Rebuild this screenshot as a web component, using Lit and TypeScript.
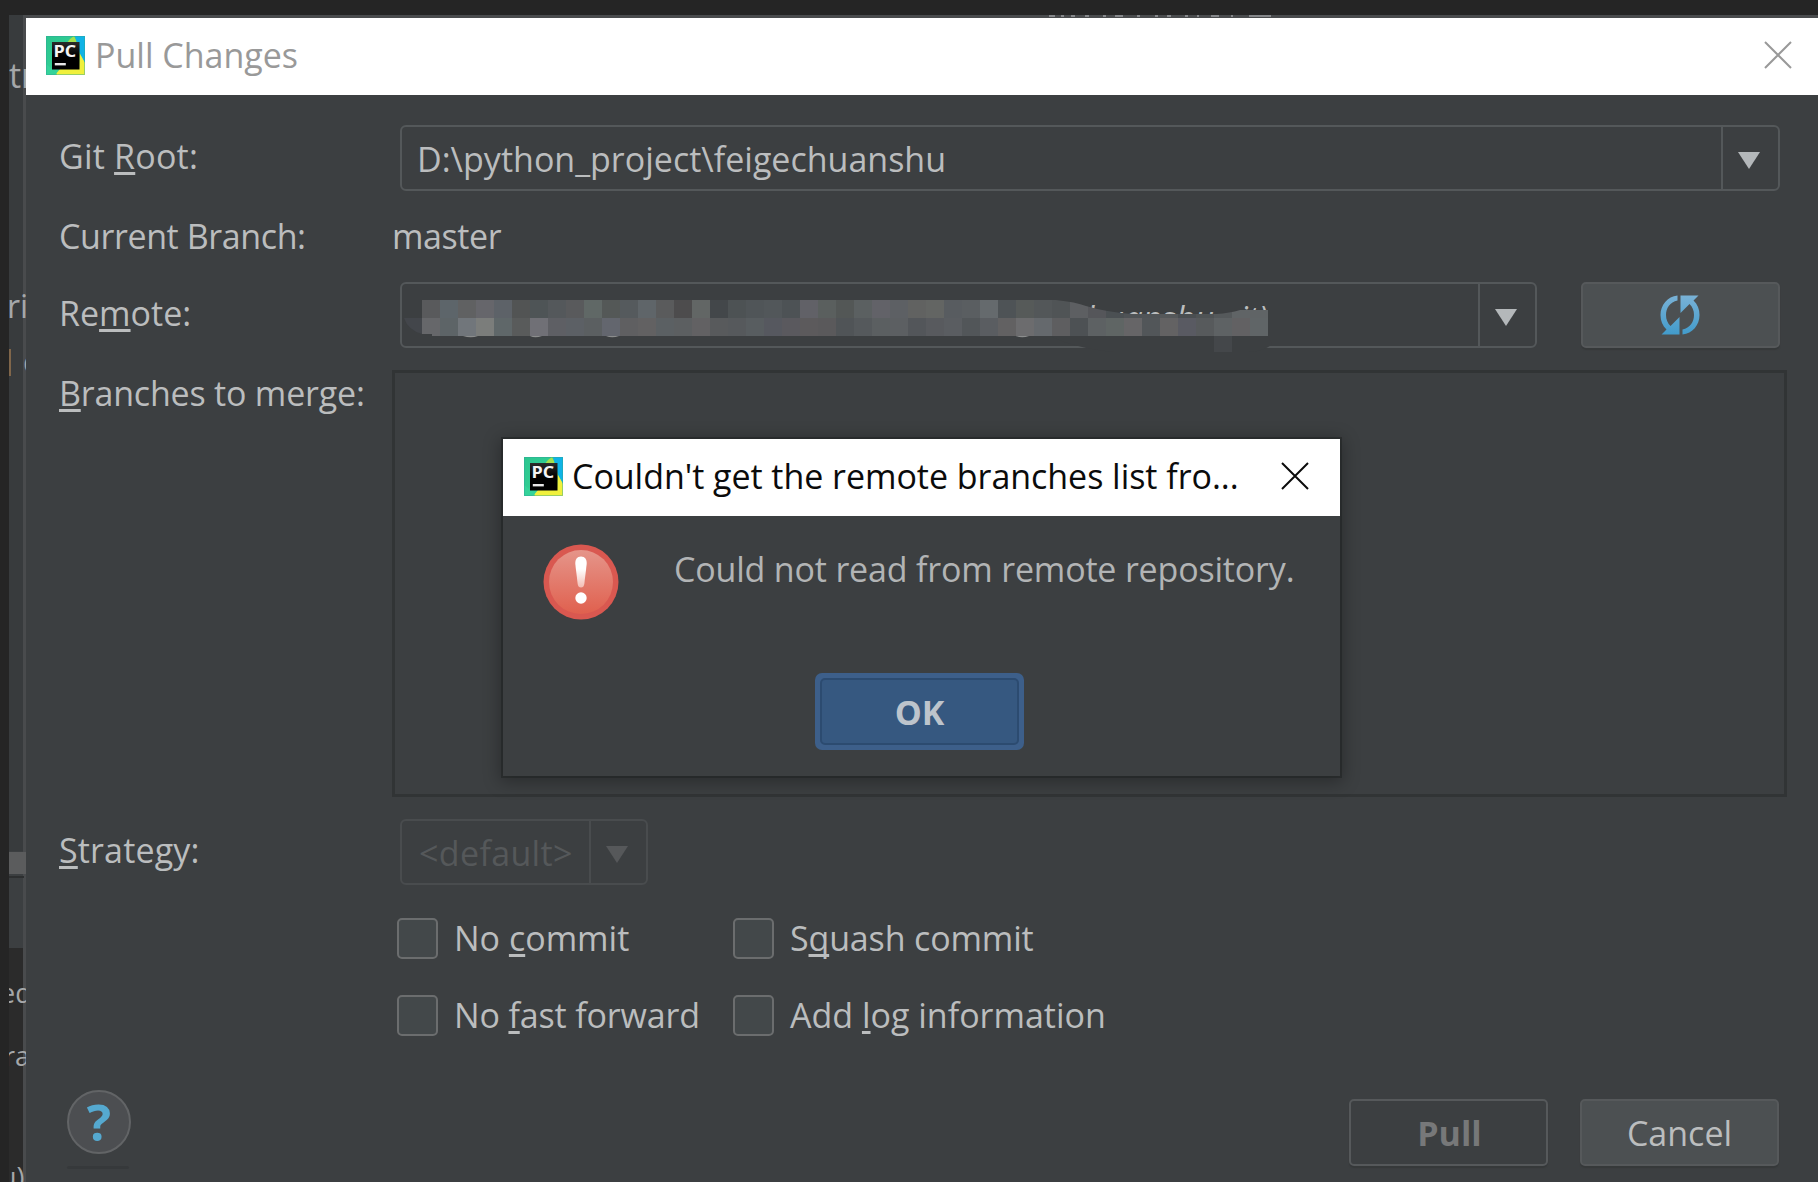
import { LitElement, html, svg, css } from "lit";
import { customElement, property } from "lit/decorators.js";

/** Renders a label whose mnemonic letter is marked with "&", e.g. "Git &Root:". */
function mnemonic(label: string) {
  const at = label.indexOf("&");
  if (at < 0) return html`${label}`;
  return html`${label.slice(0, at)}<span class="key">${label[at + 1]}</span>${label.slice(at + 2)}`;
}

const keyStyle = css`
  .key {
    text-decoration: underline;
    text-decoration-thickness: 3px;
    text-underline-offset: 3px;
    text-decoration-skip-ink: none;
  }
`;

@customElement("pc-logo")
class PcLogo extends LitElement {
  static styles = css`
    :host { display: block; flex: none; width: 39px; height: 39px; margin-top: -2px; }
    svg { display: block; }
  `;
  render() {
    return html`<svg width="39" height="39" viewBox="0 0 39 39">
      <defs>
        <linearGradient id="g" x1="0" y1="0" x2="1" y2="1">
          <stop offset="0" stop-color="#2bc58f" />
          <stop offset="0.45" stop-color="#31cd93" />
          <stop offset="0.8" stop-color="#9fe25c" />
        </linearGradient>
        <linearGradient id="k" x1="0" y1="0" x2="0" y2="1">
          <stop offset="0" stop-color="#2b2b2b" />
          <stop offset="0.5" stop-color="#000" />
        </linearGradient>
      </defs>
      <rect width="39" height="39" fill="url(#g)" />
      <path d="M20 8 24 3 28 0 31 6 34 20 26 30Z" fill="#a4e04e" />
      <path d="M29 0H39V27L34 18Z" fill="#10b3e6" />
      <path d="M34 18 39 27V39H11L9 32 33 33Z" fill="#f0f03c" />
      <path d="M6 33H14L9 39H0V28Z" fill="#35d39a" />
      <path d="M0.5 0.5H38.5V38.5H0.5Z" fill="none" stroke="#2fa596" stroke-opacity="0.45" />
      <rect x="6" y="6" width="27.5" height="27.5" fill="url(#k)" />
      <text x="7.6" y="20.6" textLength="22.6" lengthAdjust="spacingAndGlyphs" font-family="Open Sans, sans-serif"
        font-weight="700" font-size="16.5" fill="#f4f4f4">PC</text>
      <rect x="8.8" y="27" width="11" height="2.4" fill="#e8e8e8" />
    </svg>`;
  }
}

@customElement("close-icon")
class CloseIcon extends LitElement {
  static styles = css`
    :host { display: block; flex: none; width: 28px; height: 28px; margin-top: -3px; }
    svg { display: block; }
  `;
  render() {
    return html`<svg width="28" height="28" viewBox="0 0 28 28">
      <path d="M1 1 27 27M27 1 1 27" fill="none" stroke="currentColor" stroke-width="2" />
    </svg>`;
  }
}

@customElement("combo-box")
class ComboBox extends LitElement {
  @property({ type: Boolean, reflect: true }) disabled = false;

  static styles = css`
    :host {
      display: flex;
      box-sizing: border-box;
      height: 66px;
      border: 2px solid #54585a;
      border-radius: 6px;
      color: #bbbdbe;
      position: relative;
    }
    :host([disabled]) { border-color: #494c4e; color: #55585a; }
    .value { flex: 1; min-width: 0; padding-left: 15px; line-height: 65px; white-space: pre; }
    .arrow {
      width: 57px;
      border-left: 2px solid #54585a;
      display: flex;
      align-items: center;
      box-sizing: border-box;
      padding-left: 15px;
    }
    :host([disabled]) .arrow { border-color: #494c4e; }
    .arrow svg { display: block; margin-top: 4px; }
  `;
  render() {
    return html`<div class="value"><slot></slot></div>
      <div class="arrow">
        <svg width="22" height="17" viewBox="0 0 22 17"><path d="M0 0H22L11 17Z" fill=${this.disabled ? "#56585a" : "#b4b8ba"} /></svg>
      </div>`;
  }
}

@customElement("check-box")
class CheckBox extends LitElement {
  @property() label = "";

  static styles = [
    keyStyle,
    css`
      :host { display: flex; align-items: center; height: 41px; line-height: 41px; white-space: pre; }
      .box {
        box-sizing: border-box;
        width: 41px;
        height: 41px;
        margin-right: 16px;
        border: 2.4px solid #6b6d6e;
        border-radius: 5px;
        background: #43484a;
      }
      .text { padding-bottom: 1px; }
    `,
  ];
  render() {
    return html`<span class="box"></span><span class="text">${mnemonic(this.label)}</span>`;
  }
}

const CELL = 18;
const UPPER =
  "595a5c 5d656a 606162 66666b 5d6268 525454 4e5456 54585b 595a5c 606866 545857 555a5d 5f6569 5a5b5c 4d4c4d 626665 43474a 4d5254 505558 52575a 4d5255 616167 5a5f5e 535756 5b6061 626268 5d6064 616261 636563 585c60 5a5e61 656a6d 4e5356 565a59 535759 505456 5d5f62 55565a 4b5053 4f5356 505457 55585a 4a4e51 4f5355 55595b 606466 606466".split(" ");
const LOWER =
  "66676a 5d6467 71767b 7b7d7b 5f6769 595b5b 707076 5e5f64 5c6065 5b5f61 63666e 5f5f61 626162 5b6063 5c5f61 626163 585a5c 56595c 585d60 56585f 5a595e 5c5a5c 5a595b 505457 55595c 5b5f61 5c5f62 53565a 585a5e 5a5d61 525659 5a5d61 626162 6c6c6e 65696d 5e5e60 4d5154 5d6163 5f6564 666567 525659 636263 595a62 575a5c 5e6264 626163 606567".split(" ");

/** Pixelated strip that conceals the remote address. */
@customElement("pixel-mask")
class PixelMask extends LitElement {
  static styles = css`
    :host { display: block; position: absolute; left: 2px; top: 10px; }
    svg { display: block; }
  `;
  render() {
    return html`<svg width="880" height="60" viewBox="0 0 880 60">
      <defs>
        <clipPath id="c"><path d="M0 6H652Q672 8 682 12Q702 18 728 20H812Q826 19 836 16H864V24H0Z" /></clipPath>
      </defs>
      <path d="M652 24V6Q680 13 698 16Q714 19 728 20H812L836 16H864V24Z" fill="#3c3f41" />
      <path d="M0 24H18V40Q4 36 0 24Z" fill="#43464b" />
      <path d="M646 42H864L868 50Q860 58 840 58H710Q670 54 646 42Z" fill="#3c3f41" />
      <g clip-path="url(#c)" shape-rendering="crispEdges">
        ${UPPER.map((c, i) => svg`<rect x=${18 + i * CELL} y="6" width=${CELL} height=${CELL} fill=${"#" + c} />`)}
      </g>
      <g shape-rendering="crispEdges">
        ${LOWER.map((c, i) => svg`<rect x=${18 + i * CELL} y="24" width=${CELL} height=${CELL} fill=${"#" + c} />`)}
        <rect x="810" y="42" width="18" height="16" fill="#44474a" />
      </g>
      <path d="M18 40H28V42H18Z" fill="#3c3f41" />
      <path d="M59 42H74Q67 44.500 59 42ZM126 42H138Q131 44.500 126 42ZM202 42H215Q208 44.500 202 42ZM612 42H625Q618 44.500 612 42Z" fill="#8b8d8d" />
    </svg>`;
  }
}

@customElement("error-dialog")
class ErrorDialog extends LitElement {
  static styles = css`
    :host {
      display: flex;
      flex-direction: column;
      width: 837px;
      height: 337px;
      background: #3c3f41;
      box-shadow: 0 0 0 2px rgba(34, 36, 37, 0.6), 0 3px 16px 3px rgba(0, 0, 0, 0.3);
      color: #b2b4b5;
    }
    .title {
      display: flex;
      align-items: center;
      box-sizing: border-box;
      height: 77px;
      padding: 0 31px 0 21px;
      background: #fff;
      color: #0b0b0b;
      white-space: pre;
    }
    .title span { flex: 1; margin-left: 9px; line-height: 75px; height: 77px; letter-spacing: -0.04px; }
    .message { display: flex; margin: 28px 0 0 40px; }
    .message svg { display: block; flex: none; }
    .message p { margin: 0 0 0 55px; line-height: 50px; white-space: pre; letter-spacing: -0.18px; }
    .ok {
      box-sizing: border-box;
      width: 209px;
      height: 77px;
      margin: 53px 0 0 312px;
      padding: 5px;
      border-radius: 7px;
      background: #3d5f8a;
    }
    .face {
      box-sizing: border-box;
      height: 67px;
      border: 2px solid #2c4b70;
      border-radius: 5px;
      background: #365880;
      color: #bdc4cc;
      font-weight: 700;
      text-align: center;
      line-height: 64px;
    }
  `;
  render() {
    return html`
      <div class="title">
        <pc-logo></pc-logo>
        <span>Couldn't get the remote branches list fro...</span>
        <close-icon></close-icon>
      </div>
      <div class="message">
        <svg width="76" height="76" viewBox="0 0 76 76">
          <defs>
            <linearGradient id="r" x1="0" y1="0" x2="0" y2="1">
              <stop offset="0" stop-color="#e5958a" /><stop offset="1" stop-color="#e0604e" />
            </linearGradient>
            <linearGradient id="w" x1="0" y1="0" x2="0" y2="1">
              <stop offset="0.4" stop-color="#fff" /><stop offset="1" stop-color="#f3bdb4" />
            </linearGradient>
          </defs>
          <circle cx="38" cy="38" r="37.500" fill="#d95850" />
          <circle cx="38" cy="38" r="32" fill="url(#r)" />
          <path d="M38 12.500C42 12.500 44 15.500 43.700 20L41.300 40Q40.800 43.500 38 43.500T34.700 40L32.300 20C32 15.500 34 12.500 38 12.500Z" fill="url(#w)" />
          <circle cx="38" cy="54" r="5.700" fill="#fff" />
        </svg>
        <p>Could not read from remote repository.</p>
      </div>
      <div class="ok"><div class="face">OK</div></div>
    `;
  }
}

@customElement("app-root")
class AppRoot extends LitElement {
  static styles = [
    keyStyle,
    css`
      :host {
        display: block;
        position: relative;
        box-sizing: border-box;
        width: 1818px;
        height: 1182px;
        padding: 15px 0 0 9px;
        overflow: hidden;
        background: #252525;
        font-family: "Open Sans", "Noto Sans", sans-serif;
        font-size: 34px;
        color: #bbbdbe;
      }
      .ide { display: flex; height: 1167px; }
      .strip { flex: none; width: 14px; background: #2b2b2b; position: relative; }
      .pane { height: 836px; background: #383b3d; }
      .pane2 { height: 97px; background: #3c3f41; }
      .frag {
        position: absolute;
        width: 17px;
        height: 40px;
        line-height: 40px;
        overflow: hidden;
        white-space: pre;
        font-size: 27px;
        z-index: 1;
        color: #a5a7a9;
      }
      .frag i { font-style: normal; position: relative; }
      .thumb { position: absolute; left: 0; top: 837px; width: 17px; height: 22px; background: #5b5c5d; z-index: 1; }
      .rule { position: absolute; left: 0; top: 861px; width: 15px; height: 2px; background: #2d2f30; }
      .bar { position: absolute; left: 0; top: 334px; width: 2px; height: 27px; background: #80664a; z-index: 1; }
      .dialog {
        flex: 1;
        box-sizing: border-box;
        border: 3px solid #494b4d;
        border-width: 3px 0 0 3px;
        background: #3c3f41;
        display: flex;
        flex-direction: column;
      }
      .title {
        display: flex;
        align-items: center;
        box-sizing: border-box;
        height: 77px;
        flex: none;
        padding: 0 26px 0 20px;
        background: #fff;
        color: #999;
      }
      .title span { flex: 1; margin-left: 10px; height: 77px; line-height: 74px; }
      .row { display: flex; flex: none; margin-left: 33px; width: 1721px; }
      .label { width: 341px; flex: none; white-space: pre; line-height: 63px; }
      .fill { flex: 1; }
      .r1 { margin-top: 30px; }
      .r1 .label { letter-spacing: 0.2px; }
      .r2 { margin-top: 22px; height: 44px; }
      .r2 .label, .branch { line-height: 46px; letter-spacing: -0.4px; }
      .branch { margin-left: -8px; }
      .r3 { margin-top: 25px; }
      .remote { width: 1137px; flex: none; margin-right: 44px; }
      .tail {
        position: absolute;
        right: 267px;
        top: 0;
        line-height: 68px;
        font-style: italic;
        font-size: 33px;
      }
      .button {
        box-sizing: border-box;
        width: 199px;
        height: 67px;
        border: 2px solid #56595b;
        border-radius: 5px;
        background: #4c5052;
        line-height: 64px;
        text-align: center;
        box-shadow: 0 2px 1px #36393a;
      }
      .refresh { height: 66px; display: flex; align-items: center; justify-content: center; padding-right: 2px; }
      .refresh svg { display: block; }
      .off { background: none; color: #777879; font-weight: 700; padding-left: 2px; }
      .r4 { margin-top: 22px; height: 427px; width: 1728px; }
      .r4 .label { width: 333px; line-height: 46px; letter-spacing: -0.2px; }
      .list { flex: 1; border: 3px solid #313435; }
      .r5 { margin-top: 22px; }
      .r5 .label { letter-spacing: 0.15px; }
      .strategy { width: 248px; }
      .strategy span { margin-left: 2px; letter-spacing: 0.35px; }
      .checks {
        display: grid;
        flex: none;
        grid-template-columns: 336px 1fr;
        row-gap: 36px;
        margin: 33px 0 0 371px;
      }
      .tight { letter-spacing: -0.15px; }
      .foot { margin-top: 63px; width: 1720px; align-items: flex-start; }
      .help {
        box-sizing: border-box;
        width: 64px;
        height: 64px;
        margin: -9px 0 0 8px;
        border: 2px solid #626466;
        border-radius: 50%;
        background: #4c4e51;
        color: #55a9d0;
        font-weight: 700;
        font-size: 51px;
        line-height: 59px;
        text-align: center;
      }
      .shade { width: 62px; height: 3px; margin: 12px 0 0 8px; background: #36393b; border-radius: 2px; }
      .cancel { margin-left: 32px; }
      .peek { position: absolute; left: 1045px; top: 15px; }
      .modal { position: absolute; left: 503px; top: 439px; }
    `,
  ];

  render() {
    return html`
      <div class="ide">
        <div class="strip">
          <div class="pane"></div>
          <div class="pane2"></div>
          <div class="frag" style="top:40px;font-size:34px">tr</div>
          <div class="frag" style="top:271px;font-size:32px"><i style="left:-2px">ri</i></div>
          <div class="bar"></div>
          <div class="frag" style="top:326px;font-size:31px"><i style="left:14px">d</i></div>
          <div class="thumb"></div>
          <div class="rule"></div>
          <div class="frag" style="top:958px"><i style="left:-9px">ed</i></div>
          <div class="frag" style="top:1021px"><i style="left:-5px">ra</i></div>
          <div class="frag" style="top:1142px;height:25px"><i style="left:-9px">u)</i></div>
        </div>
        <div class="dialog">
          <div class="title">
            <pc-logo></pc-logo>
            <span>Pull Changes</span>
            <close-icon></close-icon>
          </div>
          <div class="row r1">
            <div class="label">${mnemonic("Git &Root:")}</div>
            <combo-box class="fill">D:\\python_project\\feigechuanshu</combo-box>
          </div>
          <div class="row r2">
            <div class="label">Current Branch:</div>
            <div class="branch">master</div>
          </div>
          <div class="row r3">
            <div class="label">${mnemonic("Re&mote:")}</div>
            <combo-box class="remote"><span class="tail">huanshu.git)</span><pixel-mask></pixel-mask></combo-box>
            <div class="button refresh">
              <svg width="40" height="40" viewBox="0 0 40 40">
                <defs>
                  <linearGradient id="b" gradientUnits="userSpaceOnUse" x1="0" y1="0" x2="0" y2="40">
                    <stop offset="0" stop-color="#7ab2d6" /><stop offset="1" stop-color="#419bcb" />
                  </linearGradient>
                </defs>
                <g fill="url(#b)">
                  <path d="M17.500 0.500V5.500C10 7 6 13 6 20C6 24.500 7.500 28 10.500 31L19.500 22V39.500H1.500L6.500 34.500C2.500 30.500 0.500 26 0.500 20C0.500 10 7.500 1.500 17.500 0.500Z" />
                  <path d="M22.500 39.500V34.500C30 33 34 27 34 20C34 15.500 32.500 12 29.500 9L20.500 18V0.500H38.500L33.500 5.500C37.500 9.500 39.500 14 39.500 20C39.500 30 32.500 38.500 22.500 39.500Z" />
                </g>
              </svg>
            </div>
          </div>
          <div class="row r4">
            <div class="label">${mnemonic("&Branches to merge:")}</div>
            <div class="list"></div>
          </div>
          <div class="row r5">
            <div class="label">${mnemonic("&Strategy:")}</div>
            <combo-box class="strategy" disabled><span>&lt;default&gt;</span></combo-box>
          </div>
          <div class="checks">
            <check-box label="No &commit"></check-box>
            <check-box class="tight" label="S&quash commit"></check-box>
            <check-box class="tight" label="No &fast forward"></check-box>
            <check-box label="Add &log information"></check-box>
          </div>
          <div class="row foot">
            <div>
              <div class="help">?</div>
              <div class="shade"></div>
            </div>
            <div class="fill"></div>
            <div class="button off">Pull</div>
            <div class="button cancel">Cancel</div>
          </div>
        </div>
      </div>
      <svg class="peek" width="230" height="3" viewBox="0 0 230 3">
        <path d="M4 1H10M16 1H19M26 1H30M40 1H44M58 1H61M70 1H78M92 1H95M110 1H113M122 1H126M140 1H143M152 1H154M166 1H174M186 1H188M204 1H226" stroke="#85878a" stroke-width="2" />
      </svg>
      <error-dialog class="modal"></error-dialog>
    `;
  }
}
